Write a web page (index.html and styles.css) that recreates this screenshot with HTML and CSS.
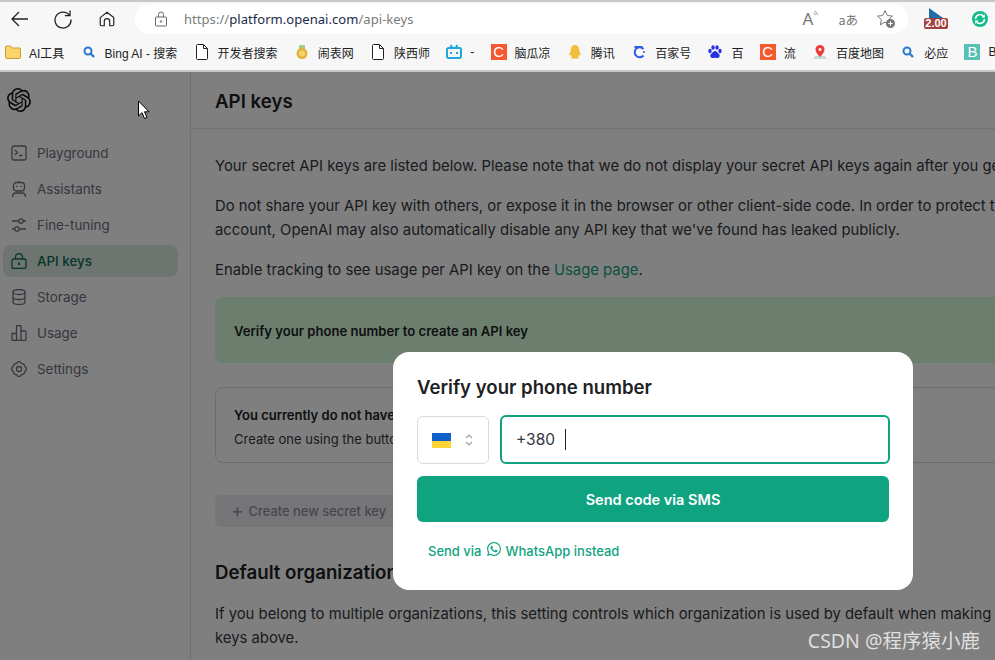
FILE: index.html
```html
<!DOCTYPE html>
<html lang="en">
<head>
    <meta charset="UTF-8">
    <meta name="viewport" content="width=device-width, initial-scale=1.0">
    <title>API keys - OpenAI</title>
    <link rel="stylesheet" href="styles.css">
</head>
<body>

    <!-- Browser chrome -->
    <div class="toolbar">
        <svg class="tool-icon tool-back" viewBox="0 0 20 20"><path d="M18 10H2M9 3l-7 7 7 7"/></svg>
        <svg class="tool-icon tool-reload" viewBox="0 0 20 20"><path d="M16.600 6.500A8 8 0 1 0 18 10.500M17 1.500v5.200h-5.200"/></svg>
        <svg class="tool-icon tool-home" viewBox="0 0 20 20"><path d="M2.500 8.500 10 2.500l7.500 6v8a1 1 0 0 1-1 1h-3.500v-5a3 3 0 0 0-6 0v5H3.500a1 1 0 0 1-1-1z"/></svg>
        <div class="address">
            <svg class="lock" viewBox="0 0 14 16"><path d="M2.500 6h9a1 1 0 0 1 1 1v7a1 1 0 0 1-1 1h-9a1 1 0 0 1-1-1V7a1 1 0 0 1 1-1zM4.500 6V3.500a2.500 2.500 0 0 1 5 0V6"/><circle cx="7" cy="10.500" r=".8"/></svg>
            <span class="url"><span class="url-dim">https://</span>platform.openai.com<span class="url-dim">/api-keys</span></span>
            <span class="address-tools">
                <span class="read-aloud">A<svg viewBox="0 0 8 10"><path d="M1 3.500a3 3 0 0 1 2 3M2 1a6 6 0 0 1 4 5.500"/></svg></span>
                <span class="translate">aあ</span>
                <svg class="fav" viewBox="0 0 20 20"><path class="fav-star" d="m9 1.500 2.300 5 5.200.6-3.900 3.500 1 5.200L9 13.200l-4.600 2.600 1-5.200L1.500 7.100l5.200-.6z"/><circle class="fav-dot" cx="14.500" cy="14.500" r="4.500"/><path class="fav-plus" d="M14.500 12.300v4.400M12.300 14.500h4.400"/></svg>
            </span>
        </div>
        <div class="ext-speed">
            <svg viewBox="0 0 16 10"><path d="M1 0v10h14z"/></svg>
            <span class="speed-badge">2.00</span>
        </div>
        <div class="ext-sync">
            <svg viewBox="0 0 16 16"><circle class="sync-bg" cx="8" cy="8" r="8"/><path class="sync-arrow" d="M3.500 8a4.500 4.500 0 0 1 7.500-3.300M12.500 8A4.500 4.500 0 0 1 5 11.300"/><path class="sync-tip" d="m9.500 6.500 3.500.2-.5-3.700zM6.500 9.500 3 9.300l.5 3.700z"/></svg>
        </div>
    </div>

    <div class="bookmarks">
        <div class="bookmark">
            <svg class="bm-icon" viewBox="0 0 16 16"><path fill="#fbd46b" stroke="#c99a2e" d="M.5 3a1 1 0 0 1 1-1h4l2 2h7a1 1 0 0 1 1 1v8.500a1 1 0 0 1-1 1h-13a1 1 0 0 1-1-1z"/></svg>
            <span>AI工具</span>
        </div>
        <div class="bookmark">
            <svg class="bm-icon" viewBox="0 0 16 16"><circle cx="7" cy="7" r="3.500" fill="none" stroke="#2a78d2" stroke-width="2"/><path stroke="#2a78d2" stroke-width="2.400" d="m9.500 9.500 3.500 3.500"/></svg>
            <span>Bing AI - 搜索</span>
        </div>
        <div class="bookmark">
            <svg class="bm-icon" viewBox="0 0 16 16"><path fill="#fff" stroke="#222" d="M3.500.5h6l4 4v10a1 1 0 0 1-1 1h-9a1 1 0 0 1-1-1v-13a1 1 0 0 1 1-1zM9.500.5v4h4"/></svg>
            <span>开发者搜索</span>
        </div>
        <div class="bookmark">
            <svg class="bm-icon" viewBox="0 0 16 16"><path fill="#a9c98f" d="M5 1h6v4H5z"/><circle cx="8" cy="9.500" r="5.500" fill="#e5b23a"/><circle cx="8" cy="9.500" r="3" fill="#f3d36f"/></svg>
            <span>闹表网</span>
        </div>
        <div class="bookmark">
            <svg class="bm-icon" viewBox="0 0 16 16"><path fill="#fff" stroke="#222" d="M3.500.5h6l4 4v10a1 1 0 0 1-1 1h-9a1 1 0 0 1-1-1v-13a1 1 0 0 1 1-1zM9.500.5v4h4"/></svg>
            <span>陕西师</span>
        </div>
        <div class="bookmark">
            <svg class="bm-icon" viewBox="0 0 16 16"><path fill="none" stroke="#1fa6e0" stroke-width="2" d="M2.500 4h11a1.500 1.500 0 0 1 1.500 1.500v7a1.500 1.500 0 0 1-1.500 1.500h-11A1.500 1.500 0 0 1 1 12.500v-7A1.500 1.500 0 0 1 2.500 4zM4.500 1l2 3M11.500 1l-2 3"/><path stroke="#1fa6e0" stroke-width="2" d="M5 8v2M11 8v2"/></svg>
            <span>-</span>
        </div>
        <div class="bookmark">
            <span class="bm-icon square-c">C</span>
            <span>脑瓜凉</span>
        </div>
        <div class="bookmark">
            <svg class="bm-icon" viewBox="0 0 16 16"><path fill="#f2bd3c" d="M8 1c3 0 4.200 2.400 4.200 5 0 1.500 2.300 4.500 1.500 5.500-.4.400-1.200-.3-1.600-1-.2 1.300-.7 2.200-1.400 2.800.9.300 1.500.7 1.300 1.200H3.900c-.2-.5.400-.9 1.300-1.200-.7-.6-1.200-1.500-1.400-2.800-.4.700-1.200 1.400-1.600 1C1.500 10.500 3.800 7.500 3.800 6 3.800 3.400 5 1 8 1z"/></svg>
            <span>腾讯</span>
        </div>
        <div class="bookmark">
            <svg class="bm-icon" viewBox="0 0 16 16"><path fill="none" stroke="#2d5bea" stroke-width="2" d="M12.500 11.500A5 5 0 1 1 12.500 5M3.500 3h8"/><circle cx="13" cy="8" r="1" fill="#2d5bea"/></svg>
            <span>百家号</span>
        </div>
        <div class="bookmark">
            <svg class="bm-icon" viewBox="0 0 16 16"><g fill="#2932e1"><ellipse cx="3" cy="7" rx="1.700" ry="2.200"/><ellipse cx="6" cy="3.500" rx="1.700" ry="2.200"/><ellipse cx="10" cy="3.500" rx="1.700" ry="2.200"/><ellipse cx="13" cy="7" rx="1.700" ry="2.200"/><path d="M8 7c2 0 2.500 2 4 3 1.500 1.500.5 4-1.500 4-1 0-1.500-.3-2.500-.3s-1.500.3-2.500.3c-2 0-3-2.500-1.500-4 1.500-1 2-3 4-3z"/></g></svg>
            <span>百</span>
        </div>
        <div class="bookmark">
            <span class="bm-icon square-c">C</span>
            <span>流</span>
        </div>
        <div class="bookmark">
            <svg class="bm-icon" viewBox="0 0 16 16"><path fill="#bfe0d2" d="M3 12h10l1.500 3h-13z"/><path fill="#ea3a3a" d="M8 1a4.500 4.500 0 0 1 4.500 4.500C12.500 8.500 8 13 8 13S3.500 8.500 3.500 5.500A4.500 4.500 0 0 1 8 1z"/><circle cx="8" cy="5.500" r="1.500" fill="#fff"/></svg>
            <span>百度地图</span>
        </div>
        <div class="bookmark">
            <svg class="bm-icon" viewBox="0 0 16 16"><circle cx="7" cy="7" r="3.500" fill="none" stroke="#2a78d2" stroke-width="2"/><path stroke="#2a78d2" stroke-width="2.400" d="m9.500 9.500 3.500 3.500"/></svg>
            <span>必应</span>
        </div>
        <div class="bookmark">
            <span class="bm-icon square-b">B</span>
            <span>Bo</span>
        </div>
    </div>

    <!-- Page -->
    <div class="app">
        <div class="sidebar">
            <svg class="logo" viewBox="0 0 24 24"><path d="M22.2819 9.8211a5.9847 5.9847 0 0 0-.5157-4.9108 6.0462 6.0462 0 0 0-6.5098-2.9A6.0651 6.0651 0 0 0 4.9807 4.1818a5.9847 5.9847 0 0 0-3.9977 2.9 6.0462 6.0462 0 0 0 .7427 7.0966 5.98 5.98 0 0 0 .511 4.9107 6.051 6.051 0 0 0 6.5146 2.9001A5.9847 5.9847 0 0 0 13.2599 24a6.0557 6.0557 0 0 0 5.7718-4.2058 5.9894 5.9894 0 0 0 3.9977-2.9001 6.0557 6.0557 0 0 0-.7475-7.0729zm-9.022 12.6081a4.4755 4.4755 0 0 1-2.8764-1.0408l.1419-.0804 4.7783-2.7582a.7948.7948 0 0 0 .3927-.6813v-6.7369l2.02 1.1686a.071.071 0 0 1 .038.052v5.5826a4.504 4.504 0 0 1-4.4945 4.4944zm-9.6607-4.1254a4.4708 4.4708 0 0 1-.5346-3.0137l.142.0852 4.783 2.7582a.7712.7712 0 0 0 .7806 0l5.8428-3.3685v2.3324a.0804.0804 0 0 1-.0332.0615L9.74 19.9502a4.4992 4.4992 0 0 1-6.1408-1.6464zM2.3408 7.8956a4.485 4.485 0 0 1 2.3655-1.9728V11.6a.7664.7664 0 0 0 .3879.6765l5.8144 3.3543-2.0201 1.1685a.0757.0757 0 0 1-.071 0l-4.8303-2.7865A4.504 4.504 0 0 1 2.3408 7.872zm16.5963 3.8558L13.1038 8.364 15.1192 7.2a.0757.0757 0 0 1 .071 0l4.8303 2.7913a4.4944 4.4944 0 0 1-.6765 8.1042v-5.6772a.79.79 0 0 0-.407-.667zm2.0107-3.0231l-.142-.0852-4.7735-2.7818a.7759.7759 0 0 0-.7854 0L9.409 9.2297V6.8974a.0662.0662 0 0 1 .0284-.0615l4.8303-2.7866a4.4992 4.4992 0 0 1 6.6802 4.66zM8.3065 12.863l-2.02-1.1638a.0804.0804 0 0 1-.038-.0567V6.0742a4.4992 4.4992 0 0 1 7.3757-3.4537l-.142.0805L8.704 5.459a.7948.7948 0 0 0-.3927.6813zm1.0976-2.3654l2.602-1.4998 2.6069 1.4998v2.9994l-2.5974 1.4997-2.6067-1.4997Z"/></svg>
            <nav class="nav">
                <a class="nav-item">
                    <svg class="nav-icon" viewBox="0 0 16 16"><rect x="1" y="1" width="14" height="14" rx="1.500"/><path d="m4 5 2.500 2.500L4 10M8 10.500h3.500"/></svg>
                    Playground
                </a>
                <a class="nav-item">
                    <svg class="nav-icon" viewBox="0 0 16 16"><rect x="2.500" y="1.500" width="11" height="8.500" rx="3"/><path d="M8 0v1.500M1.500 16c0-3 2-4 3.500-4h6c1.500 0 3.500 1 3.500 4"/><path class="nav-eyes" d="M5.800 5v1M10.200 5v1"/></svg>
                    Assistants
                </a>
                <a class="nav-item">
                    <svg class="nav-icon" viewBox="0 0 16 16"><circle cx="10" cy="4" r="2.200"/><circle cx="6" cy="12" r="2.200"/><path d="M1 4h6.800M12.200 4H15M1 12h2.800M8.200 12H15"/></svg>
                    Fine-tuning
                </a>
                <a class="nav-item nav-active">
                    <svg class="nav-icon" viewBox="0 0 16 16"><rect x="1" y="6" width="14" height="9.500" rx="1.500"/><path d="M4.500 6V4a3.500 3.500 0 0 1 7 0v2"/><path class="nav-dot" d="M8 9.500v2.500"/></svg>
                    API keys
                </a>
                <a class="nav-item">
                    <svg class="nav-icon" viewBox="0 0 16 16"><ellipse cx="8" cy="3" rx="6" ry="2.500"/><path d="M2 3v10c0 1.400 2.700 2.500 6 2.500s6-1.100 6-2.500V3M2 8c0 1.400 2.700 2.500 6 2.500s6-1.100 6-2.500"/></svg>
                    Storage
                </a>
                <a class="nav-item">
                    <svg class="nav-icon" viewBox="0 0 16 16"><path d="M1 8.500h4.500v7H2a1 1 0 0 1-1-1zM5.500 1.500a1 1 0 0 1 1-1h2.500a1 1 0 0 1 1 1v14H5.500zM10 6h4a1 1 0 0 1 1 1v7.500a1 1 0 0 1-1 1h-4z"/></svg>
                    Usage
                </a>
                <a class="nav-item">
                    <svg class="nav-icon" viewBox="0 0 16 16"><path d="M6.600 1 8 .5 9.400 1l1 1.300 1.700.2 1 1 .5 1.700 1.300 1.200L15.500 8l-.6 1.600-1.300 1.200-.5 1.700-1 1-1.700.2L9.400 15 8 15.500 6.600 15l-1-1.300-1.700-.2-1-1-.5-1.700-1.300-1.200L.5 8l.6-1.600 1.300-1.200.5-1.700 1-1 1.700-.2z"/><circle cx="8" cy="8" r="2.500"/></svg>
                    Settings
                </a>
            </nav>
        </div>

        <div class="main">
            <div class="page-head">
                <h1>API keys</h1>
            </div>
            <div class="content">
                <p>Your secret API keys are listed below. Please note that we do not display your secret API keys again after you generate them.</p>
                <p>Do not share your API key with others, or expose it in the browser or other client-side code. In order to protect the security of your account, OpenAI may also automatically disable any API key that we've found has leaked publicly.</p>
                <p>Enable tracking to see usage per API key on the <a class="link">Usage page</a>.</p>
                <div class="banner">Verify your phone number to create an API key</div>
                <div class="empty-box">
                    <div class="empty-title">You currently do not have any API keys</div>
                    <div>Create one using the button below to get started</div>
                </div>
                <button class="create-btn"><span class="plus">+</span>Create new secret key</button>
                <h2>Default organization</h2>
                <p>If you belong to multiple organizations, this setting controls which organization is used by default when making requests with the API keys above.</p>
            </div>
        </div>

        <!-- Dim layer and dialog -->
        <div class="overlay">
            <div class="modal">
                <div class="modal-title">Verify your phone number</div>
                <div class="phone-row">
                    <div class="country">
                        <span class="flag"></span>
                        <svg class="chevrons" viewBox="0 0 8 12"><path d="m1 4 3-3 3 3M1 8l3 3 3-3"/></svg>
                    </div>
                    <div class="phone-input">+380<span class="caret"></span></div>
                </div>
                <button class="send-btn">Send code via SMS</button>
                <div class="whatsapp">
                    Send via
                    <svg class="wa-icon" viewBox="0 0 24 24"><path d="M17.472 14.382c-.297-.149-1.758-.867-2.03-.967-.273-.099-.471-.148-.67.15-.197.297-.767.966-.94 1.164-.173.199-.347.223-.644.075-.297-.15-1.255-.463-2.39-1.475-.883-.788-1.48-1.761-1.653-2.059-.173-.297-.018-.458.13-.606.134-.133.298-.347.446-.52.149-.174.198-.298.298-.497.099-.198.05-.371-.025-.52-.075-.149-.669-1.612-.916-2.207-.242-.579-.487-.5-.669-.51-.173-.008-.371-.01-.57-.01-.198 0-.52.074-.792.372-.272.297-1.04 1.016-1.04 2.479 0 1.462 1.065 2.875 1.213 3.074.149.198 2.096 3.2 5.077 4.487.709.306 1.262.489 1.694.625.712.227 1.36.195 1.871.118.571-.085 1.758-.719 2.006-1.413.248-.694.248-1.289.173-1.413-.074-.124-.272-.198-.57-.347m-5.421 7.403h-.004a9.87 9.87 0 01-5.031-1.378l-.361-.214-3.741.982.998-3.648-.235-.374a9.86 9.86 0 01-1.51-5.26c.001-5.45 4.436-9.884 9.888-9.884 2.64 0 5.122 1.03 6.988 2.898a9.825 9.825 0 012.893 6.994c-.003 5.45-4.437 9.884-9.885 9.884m8.413-18.297A11.815 11.815 0 0012.05 0C5.495 0 .16 5.335.157 11.892c0 2.096.547 4.142 1.588 5.945L.057 24l6.305-1.654a11.882 11.882 0 005.683 1.448h.005c6.554 0 11.89-5.335 11.893-11.893a11.821 11.821 0 00-3.48-8.413Z"/></svg>
                    WhatsApp instead
                </div>
            </div>
        </div>

        <svg class="cursor" viewBox="0 0 12 20"><path d="M1 1v15l3.500-3.300 2.500 5.800 2.500-1-2.500-5.700h4.500z"/></svg>
        <div class="watermark">CSDN @程序猿小鹿</div>
    </div>

</body>
</html>
```

FILE: styles.css
```css
/* Page frame */
html, body {
    height: 100%;
}

body {
    font-family: Inter, "Noto Sans", sans-serif;
    background-color: #fff;
    margin: 0;
    padding: 0;
    height: 660px;
    overflow: hidden;
    display: flex;
    flex-direction: column;
}

/* Browser toolbar */
.toolbar {
    height: 36px;
    flex: none;
    box-sizing: border-box;
    border-top: 2px solid #c8c8c8;
    background-color: #f7f7f7;
    display: flex;
    align-items: center;
    padding-left: 10px;
}

.tool-icon {
    width: 20px;
    height: 20px;
    fill: none;
    stroke: #222;
    stroke-width: 1.3;
    flex: none;
}

.tool-reload {
    margin-left: 23px;
}

.tool-home {
    margin-left: 25px;
    width: 18px;
    height: 18px;
}

.address {
    width: 773px;
    height: 30px;
    margin-left: 19px;
    background-color: #fff;
    border-radius: 15px;
    display: flex;
    align-items: center;
    box-sizing: border-box;
    padding-left: 19px;
}

.lock {
    width: 14px;
    height: 16px;
    fill: none;
    stroke: #666;
    stroke-width: 1;
    flex: none;
}

.url {
    font-family: "Noto Sans", sans-serif;
    font-size: 13px;
    color: #1b2a4a;
    margin-left: 16px;
    letter-spacing: 0.05px;
}

.url-dim {
    color: #7a7a7a;
}

.address-tools {
    margin-left: auto;
    display: flex;
    align-items: center;
    color: #777;
    padding-right: 12px;
}

.read-aloud {
    font-family: "Noto Sans", sans-serif;
    font-size: 17px;
    display: flex;
    align-items: flex-start;
    line-height: 20px;
}

.read-aloud svg {
    width: 6px;
    height: 8px;
    fill: none;
    stroke: #777;
    margin-top: 1px;
}

.translate {
    font-family: "Noto Sans CJK JP", sans-serif;
    font-size: 12.5px;
    margin-left: 19px;
}

.fav {
    width: 20px;
    height: 20px;
    margin-left: 18px;
}

.fav-star {
    fill: none;
    stroke: #777;
}

.fav-dot {
    fill: #777;
}

.fav-plus {
    stroke: #fff;
    stroke-width: 1.2;
}

.ext-speed {
    width: 26px;
    margin-left: 15px;
    display: flex;
    flex-direction: column;
    align-items: center;
    height: 24px;
    flex: none;
}

.ext-speed svg {
    width: 16px;
    height: 10px;
    fill: #1d6fa5;
    margin-top: 1px;
}

.speed-badge {
    background-color: #a0403f;
    color: #fff;
    font-family: "Liberation Sans", sans-serif;
    font-size: 11px;
    font-weight: bold;
    line-height: 11px;
    padding: 0 1px;
    border-radius: 2px;
}

.ext-sync {
    width: 16px;
    height: 16px;
    margin-left: 23px;
    flex: none;
}

.sync-bg {
    fill: #13bb8c;
}

.sync-arrow {
    fill: none;
    stroke: #fff;
    stroke-width: 1.6;
}

.sync-tip {
    fill: #fff;
}

/* Favourites bar */
.bookmarks {
    height: 36px;
    flex: none;
    box-sizing: border-box;
    border-bottom: 2px solid #c8c8c8;
    background-color: #f7f7f7;
    display: flex;
    align-items: center;
    gap: 16.25px;
    padding: 0 0 2px 5px;
    font-family: "Liberation Sans", "Noto Sans CJK SC", sans-serif;
    font-size: 12px;
    color: #222;
    white-space: nowrap;
    overflow: hidden;
}

.bookmark {
    display: flex;
    align-items: center;
    gap: 8px;
    flex: none;
}

.bm-icon {
    width: 16px;
    height: 16px;
    flex: none;
    display: block;
}

.square-c, .square-b {
    color: #fff;
    text-align: center;
    line-height: 16px;
    font-family: "Liberation Sans", sans-serif;
    font-size: 15px;
}

.square-c {
    background-color: #f4582f;
}

.square-b {
    background-color: #57c0b5;
}

/* App layout */
.app {
    flex: 1;
    position: relative;
    display: flex;
    overflow: hidden;
    min-height: 0;
    color: #202123;
}

.sidebar {
    width: 191px;
    flex: none;
    box-sizing: border-box;
    border-right: 1px solid #e5e5e5;
    background-color: #fff;
    padding: 16px 12px 0 3px;
}

.logo {
    width: 24px;
    height: 24px;
    fill: #111;
    display: block;
    margin-left: 4px;
}

.nav {
    margin-top: 25px;
    display: flex;
    flex-direction: column;
    gap: 4px;
}

.nav-item {
    display: flex;
    align-items: center;
    height: 32px;
    font-size: 13.4px;
    color: #6e6e80;
    border-radius: 8px;
    padding-left: 8px;
    gap: 10px;
}

.nav-icon {
    width: 16px;
    height: 16px;
    fill: none;
    stroke: #6e6e80;
    stroke-width: 1.3;
    flex: none;
}

.nav-eyes {
    stroke-width: 1.6;
}

.nav-active {
    background-color: #dcebe3;
    color: #0e6b55;
    font-weight: 500;
}

.nav-active .nav-icon {
    stroke: #0e6b55;
}

.nav-dot {
    stroke-width: 2;
}

.main {
    flex: 1;
    min-width: 0;
    background-color: #fff;
}

.page-head {
    height: 57px;
    box-sizing: border-box;
    border-bottom: 1px solid #e5e5e5;
    padding: 2px 0 0 24px;
    display: flex;
    align-items: center;
}

h1 {
    font-size: 18.7px;
    font-weight: 600;
    margin: 0;
    color: #202123;
}

.content {
    padding: 24px 0 0 24px;
    width: 945px;
    font-size: 14.85px;
    line-height: 24px;
    color: #353740;
}

p {
    margin: 0 0 15px;
    padding-top: 1px;
}

.link {
    color: #10a37f;
}

.banner {
    height: 66px;
    box-sizing: border-box;
    background-color: #d8ffdf;
    border-radius: 8px;
    display: flex;
    align-items: center;
    padding: 2px 0 0 19px;
    font-size: 13.1px;
    font-weight: 600;
    color: #202123;
}

.empty-box {
    height: 76px;
    box-sizing: border-box;
    margin-top: 24px;
    border: 1px solid #d9d9e3;
    border-radius: 8px;
    padding: 15px 18px;
    font-size: 13px;
    line-height: 24px;
}

.empty-title {
    font-weight: 600;
    color: #202123;
}

.create-btn {
    display: flex;
    align-items: center;
    margin-top: 32px;
    height: 32px;
    width: 190px;
    border: none;
    border-radius: 6px;
    background-color: #ececf1;
    color: #8e8ea0;
    font-family: inherit;
    font-size: 12.9px;
    font-weight: 500;
    padding: 1px 16px 0;
    gap: 5px;
}

.plus {
    font-size: 19px;
    font-weight: 400;
    line-height: 18px;
    margin-top: -2px;
}

h2 {
    font-size: 18.7px;
    font-weight: 600;
    color: #202123;
    margin: 34px 0 16px;
    line-height: 24px;
}

/* Dim layer and dialog */
.overlay {
    position: absolute;
    top: 0;
    left: 0;
    right: 0;
    bottom: 0;
    background-color: rgba(0, 0, 0, 0.5);
    box-sizing: border-box;
    padding: 280px 0 0 393px;
}

.modal {
    width: 520px;
    height: 238px;
    box-sizing: border-box;
    background-color: #fff;
    border-radius: 16px;
    padding: 23px 24px 0;
}

.modal-title {
    font-size: 18.6px;
    font-weight: 600;
    line-height: 24px;
    color: #202123;
}

.phone-row {
    display: flex;
    gap: 11px;
    margin-top: 17px;
}

.country {
    width: 72px;
    height: 48px;
    box-sizing: border-box;
    border: 1px solid #d9d9e3;
    border-radius: 6px;
    display: flex;
    align-items: center;
    padding-left: 14px;
    gap: 14px;
}

.flag {
    width: 19px;
    height: 15px;
    background: linear-gradient(#1060cc 50%, #ffd535 50%);
}

.chevrons {
    width: 8px;
    height: 12px;
    fill: none;
    stroke: #9a9aab;
    stroke-width: 1.2;
}

.phone-input {
    flex: 1;
    height: 49px;
    margin: -1px -1px 0 0;
    box-sizing: border-box;
    border: 2px solid #10a37f;
    border-radius: 6px;
    display: flex;
    align-items: center;
    padding-left: 14px;
    font-size: 15.5px;
    color: #353740;
}

.caret {
    width: 1px;
    height: 21px;
    background-color: #202123;
    margin-left: 10px;
}

.send-btn {
    display: block;
    width: 100%;
    height: 46px;
    margin-top: 12px;
    border: none;
    border-radius: 6px;
    background-color: #10a37f;
    color: #fff;
    font-family: inherit;
    font-size: 14.5px;
    font-weight: 600;
}

.whatsapp {
    display: flex;
    align-items: center;
    gap: 5px;
    margin: 18px 0 0 11px;
    color: #10a37f;
    font-size: 13px;
    font-weight: 500;
    line-height: 22px;
}

.wa-icon {
    width: 14px;
    height: 14px;
    fill: #10a37f;
    margin-top: -4px;
}

/* Mouse pointer and image watermark */
.cursor {
    position: absolute;
    left: 137px;
    top: 28px;
    width: 13px;
    height: 20px;
    fill: #fff;
    stroke: #000;
    stroke-width: 1;
}

.watermark {
    position: absolute;
    right: 15px;
    bottom: 9px;
    font-family: "Noto Sans", "Noto Sans CJK SC", sans-serif;
    font-size: 19.5px;
    line-height: 20px;
    color: rgba(255, 255, 255, 0.75);
}
```
